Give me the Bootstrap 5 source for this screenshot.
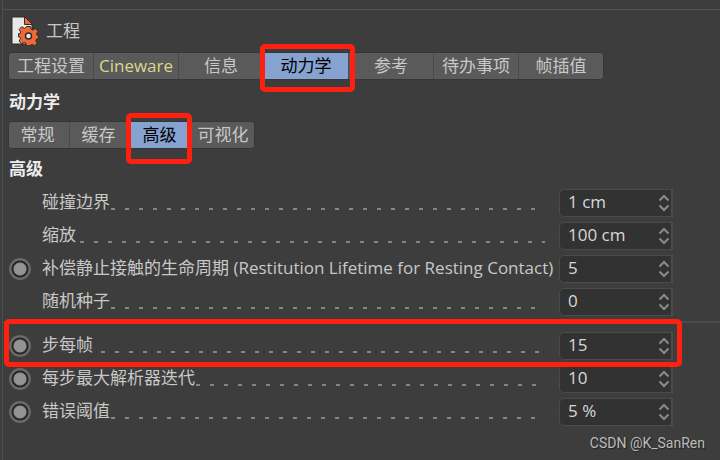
<!DOCTYPE html>
<html lang="zh-CN">
<head>
<meta charset="utf-8">
<meta name="viewport" content="width=device-width, initial-scale=1">
<title>工程</title>
<link href="https://cdn.jsdelivr.net/npm/bootstrap@5.3.0/dist/css/bootstrap.min.css" rel="stylesheet">
<style>
body { background: #3d3d3d; color: #c8c8c8; font: 17px/24px "Open Sans", "Noto Sans CJK SC", sans-serif; }
.panel { margin: 9px 0 0 2px; border-top: 1px solid #525252; padding-left: 6px; min-height: calc(100vh - 9px); }
.panel-frame { border-left: 1px solid #4d4d4d; width: 1px; left: 2px; }
.title-bar { height: 42px; padding-left: 3px; gap: 7px; }
.tab-strip { width: fit-content; border: 1px solid #363636; border-radius: 4px; background: #4b4b4b; gap: 1px; }
.tab-strip button { border: 0; padding: 0; height: 26px; background: #5a5a5a; color: #c8c8c8; line-height: 26px; }
.tab-strip .wide { width: 84px; }
.tab-strip .narrow { width: 60px; padding-right: 3px; }
.tab-strip .narrow:last-child { width: 62px; padding-right: 0; }
.tab-strip button.active { background: #86a2d0; color: #000; }
.tab-strip button.link-tab { color: #d9d98c; }
.tab-strip button:first-child { border-radius: 3px 0 0 3px; }
.tab-strip button:last-child { border-radius: 0 3px 3px 0; }
.section-title { font-size: 17px; line-height: 24px; font-weight: 700; color: #ececec; margin: 0; padding: 10px 0 7px 1px; }
.section-title.sub { padding: 8px 0 5px 1px; }
.param { height: 33px; padding-right: 47px; }
.param label { padding-bottom: 2px; }
.key-cell { width: 34px; padding-left: 1px; }
.key-cell input { appearance: none; width: 22px; height: 22px; margin: 0; border-radius: 50%; background: radial-gradient(circle, #939393 5px, #8c8c8c 6px, #272626 7px, #272626 8px, #6c6c6c 9px, #6c6c6c 10px, #606060 11px); }
.leader { height: 2px; margin: 12px 14px 0 1px; background: repeating-linear-gradient(90deg, #858585 0 4px, transparent 4px 14px); }
.number-box { width: 114px; height: 28px; border: 1px solid #4b4b4b; border-right-width: 2px; border-radius: 5px 0 0 5px; background: #323232; }
.number-box input { min-width: 0; border: 0; outline: 0; padding: 0 0 2px 8px; background: transparent; color: #d8d8d8; }
.number-box .steppers { width: 14px; }
.number-box button { border: 0; padding: 0; height: 11px; line-height: 0; background: transparent; }
.divider { height: 11px; margin: 0 0 0 -6px; padding-top: 3px; }
.divider hr { margin: 0; border-top: 2px solid #4b4b4b; opacity: 1; }
.outline { position: absolute; border: 5px solid #ff2010; border-radius: 5px; pointer-events: none; z-index: 2; }
.tab-outline { inset: -9px -7px -13px -4px; }
.subtab-outline { inset: -9px -1px -16px -5px; }
.row-outline { inset: -10px 38px -5px -4px; }
.watermark { font: 14px/16px Roboto, "Liberation Sans", sans-serif; color: #bcbcbc; text-shadow: 1px 1px 1px #222; right: 15px; bottom: 9px; }
</style>
<script src="https://cdn.jsdelivr.net/npm/bootstrap@5.3.0/dist/js/bootstrap.bundle.min.js"></script>
</head>
<body class="d-flow-root overflow-hidden position-relative">
<svg class="d-none" aria-hidden="true">
  <symbol id="up" viewBox="0 0 14 11"><path d="M2.5 8.5 7 4l4.500 4.500" fill="none" stroke="#8b8b8b" stroke-width="2"/></symbol>
  <symbol id="down" viewBox="0 0 14 11"><path d="M2.500 2.500 7 7l4.500-4.500" fill="none" stroke="#8b8b8b" stroke-width="2"/></symbol>
</svg>
<div class="panel-frame position-absolute h-100"></div>
<main class="panel">
  <header class="title-bar d-flex align-items-center">
    <svg width="28" height="32" viewBox="0 0 28 32" aria-hidden="true">
      <path d="M1 2h12l8 8v19H1z" fill="#e8e8e8" stroke="#2d2d2d"/>
      <path d="M13.500 1.500v8h8z" fill="#ee6a35" stroke="#2d2d2d"/>
      <g transform="translate(17.500 21)">
        <path d="M-2-9.500h4l.700 2.900 1.600.7 2.600-1.600 2.600 2.800-1.500 2.500.600 1.600h1.400v3.200l-2 .500-.700 1.600 1.400 2.500-2.600 2.600-2.500-1.400-1.600.700L2 9.800h-4l-.700-2.700-1.600-.7-2.500 1.400-2.600-2.600L-8 2.700l-.600-1.500-1.400-.300v-3.300h1.500l.700-1.600-1.600-2.600 2.600-2.600 2.600 1.500 1.500-.600z" fill="#ee6a35" stroke="#2d2d2d"/>
        <circle r="3" fill="#e8e8e8" stroke="#2d2d2d" stroke-width="1.500"/>
      </g>
    </svg>
    <span>工程</span>
  </header>

  <nav class="tab-strip d-flex" aria-label="工程">
    <button type="button" class="wide">工程设置</button>
    <button type="button" class="wide link-tab">Cineware</button>
    <button type="button" class="wide">信息</button>
    <div class="position-relative"><button type="button" class="wide active d-block rounded-0">动力学</button><span class="outline tab-outline"></span></div>
    <button type="button" class="wide">参考</button>
    <button type="button" class="wide">待办事项</button>
    <button type="button" class="wide">帧插值</button>
  </nav>
  <h1 class="section-title">动力学</h1>
  <nav class="tab-strip d-flex" aria-label="动力学">
    <button type="button" class="narrow">常规</button>
    <button type="button" class="narrow">缓存</button>
    <div class="position-relative"><button type="button" class="narrow active d-block rounded-0">高级</button><span class="outline subtab-outline"></span></div>
    <button type="button" class="narrow">可视化</button>
  </nav>
  <h2 class="section-title sub">高级</h2>

  <form>
    <div class="param d-flex align-items-center">
      <span class="key-cell"></span><label for="p1">碰撞边界</label><span class="leader flex-grow-1"></span>
      <div class="number-box d-flex align-items-center"><input id="p1" class="flex-grow-1" value="1 cm"><div class="steppers d-flex flex-column"><button type="button" aria-label="增加"><svg width="14" height="11"><use href="#up"/></svg></button><button type="button" aria-label="减少"><svg width="14" height="11"><use href="#down"/></svg></button></div></div>
    </div>
    <div class="param d-flex align-items-center">
      <span class="key-cell"></span><label for="p2">缩放</label><span class="leader flex-grow-1 ms-1"></span>
      <div class="number-box d-flex align-items-center"><input id="p2" class="flex-grow-1" value="100 cm"><div class="steppers d-flex flex-column"><button type="button" aria-label="增加"><svg width="14" height="11"><use href="#up"/></svg></button><button type="button" aria-label="减少"><svg width="14" height="11"><use href="#down"/></svg></button></div></div>
    </div>
    <div class="param d-flex align-items-center">
      <span class="key-cell d-flex"><input type="radio" name="k3" aria-label="补偿静止接触的生命周期"></span><label for="p3" class="text-nowrap">补偿静止接触的生命周期 (Restitution Lifetime for Resting Contact)</label>
      <div class="number-box d-flex align-items-center ms-auto flex-shrink-0"><input id="p3" class="flex-grow-1" value="5"><div class="steppers d-flex flex-column"><button type="button" aria-label="增加"><svg width="14" height="11"><use href="#up"/></svg></button><button type="button" aria-label="减少"><svg width="14" height="11"><use href="#down"/></svg></button></div></div>
    </div>
    <div class="param d-flex align-items-center">
      <span class="key-cell"></span><label for="p4">随机种子</label><span class="leader flex-grow-1"></span>
      <div class="number-box d-flex align-items-center"><input id="p4" class="flex-grow-1" value="0"><div class="steppers d-flex flex-column"><button type="button" aria-label="增加"><svg width="14" height="11"><use href="#up"/></svg></button><button type="button" aria-label="减少"><svg width="14" height="11"><use href="#down"/></svg></button></div></div>
    </div>
    <div class="divider"><hr></div>
    <div class="param d-flex align-items-center position-relative">
      <span class="outline row-outline"></span>
      <span class="key-cell d-flex"><input type="radio" name="k5" aria-label="步每帧"></span><label for="p5">步每帧</label><span class="leader flex-grow-1 ms-2"></span>
      <div class="number-box d-flex align-items-center"><input id="p5" class="flex-grow-1" value="15"><div class="steppers d-flex flex-column"><button type="button" aria-label="增加"><svg width="14" height="11"><use href="#up"/></svg></button><button type="button" aria-label="减少"><svg width="14" height="11"><use href="#down"/></svg></button></div></div>
    </div>
    <div class="param d-flex align-items-center">
      <span class="key-cell d-flex"><input type="radio" name="k6" aria-label="每步最大解析器迭代"></span><label for="p6">每步最大解析器迭代</label><span class="leader flex-grow-1"></span>
      <div class="number-box d-flex align-items-center"><input id="p6" class="flex-grow-1" value="10"><div class="steppers d-flex flex-column"><button type="button" aria-label="增加"><svg width="14" height="11"><use href="#up"/></svg></button><button type="button" aria-label="减少"><svg width="14" height="11"><use href="#down"/></svg></button></div></div>
    </div>
    <div class="param d-flex align-items-center">
      <span class="key-cell d-flex"><input type="radio" name="k7" aria-label="错误阈值"></span><label for="p7">错误阈值</label><span class="leader flex-grow-1"></span>
      <div class="number-box d-flex align-items-center"><input id="p7" class="flex-grow-1" value="5 %"><div class="steppers d-flex flex-column"><button type="button" aria-label="增加"><svg width="14" height="11"><use href="#up"/></svg></button><button type="button" aria-label="减少"><svg width="14" height="11"><use href="#down"/></svg></button></div></div>
    </div>
  </form>
</main>
<div class="watermark position-absolute">CSDN @K_SanRen</div>
</body>
</html>
